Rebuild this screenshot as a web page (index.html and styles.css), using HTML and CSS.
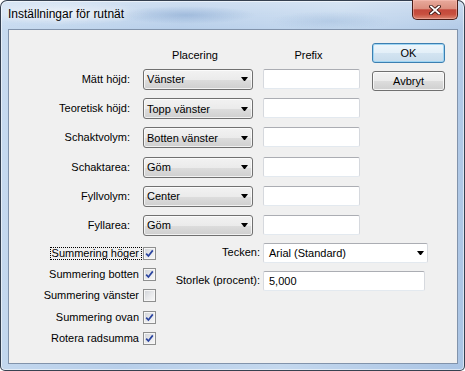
FILE: index.html
```html
<!DOCTYPE html>
<html lang="sv">
<head>
    <meta charset="UTF-8">
    <title>Inställningar för rutnät</title>
    <link rel="stylesheet" href="styles.css">
</head>
<body>
    <div class="window">
        <div class="titlebar">
            <span class="title">Inställningar för rutnät</span>
            <button class="close-button" type="button" aria-label="Stäng">
                <svg viewBox="0 0 12 10" width="12" height="10">
                    <path d="M2 1.5 L10 8.5 M10 1.5 L2 8.5" stroke="#3a1612" stroke-width="3.6" stroke-linecap="square"/>
                    <path d="M2 1.5 L10 8.5 M10 1.5 L2 8.5" stroke="#fff" stroke-width="1.8" stroke-linecap="square"/>
                </svg>
            </button>
        </div>

        <div class="client">
            <div class="top">
                <div class="fields">
                    <span></span>
                    <span class="col-head">Placering</span>
                    <span class="col-head">Prefix</span>

                    <label class="field-label">Mätt höjd:</label>
                    <div class="combo"><span>Vänster</span><i class="arrow"></i></div>
                    <div class="textbox"></div>

                    <label class="field-label">Teoretisk höjd:</label>
                    <div class="combo"><span>Topp vänster</span><i class="arrow"></i></div>
                    <div class="textbox"></div>

                    <label class="field-label">Schaktvolym:</label>
                    <div class="combo"><span>Botten vänster</span><i class="arrow"></i></div>
                    <div class="textbox"></div>

                    <label class="field-label">Schaktarea:</label>
                    <div class="combo"><span>Göm</span><i class="arrow"></i></div>
                    <div class="textbox"></div>

                    <label class="field-label">Fyllvolym:</label>
                    <div class="combo"><span>Center</span><i class="arrow"></i></div>
                    <div class="textbox"></div>

                    <label class="field-label">Fyllarea:</label>
                    <div class="combo"><span>Göm</span><i class="arrow"></i></div>
                    <div class="textbox"></div>
                </div>

                <div class="buttons">
                    <button class="btn btn-default" type="button">OK</button>
                    <button class="btn" type="button">Avbryt</button>
                </div>
            </div>

            <div class="bottom">
                <div class="checks">
                    <div class="check-row">
                        <span class="check-label focused">Summering höger</span>
                        <span class="box"><svg viewBox="0 0 11 11" width="11" height="11"><path d="M2.2 5.6 L4.4 8 L8.8 2.4" fill="none" stroke="#2a44a0" stroke-width="1.7"/></svg></span>
                    </div>
                    <div class="check-row">
                        <span class="check-label">Summering botten</span>
                        <span class="box"><svg viewBox="0 0 11 11" width="11" height="11"><path d="M2.2 5.6 L4.4 8 L8.8 2.4" fill="none" stroke="#2a44a0" stroke-width="1.7"/></svg></span>
                    </div>
                    <div class="check-row">
                        <span class="check-label">Summering vänster</span>
                        <span class="box"></span>
                    </div>
                    <div class="check-row">
                        <span class="check-label">Summering ovan</span>
                        <span class="box"><svg viewBox="0 0 11 11" width="11" height="11"><path d="M2.2 5.6 L4.4 8 L8.8 2.4" fill="none" stroke="#2a44a0" stroke-width="1.7"/></svg></span>
                    </div>
                    <div class="check-row">
                        <span class="check-label">Rotera radsumma</span>
                        <span class="box"><svg viewBox="0 0 11 11" width="11" height="11"><path d="M2.2 5.6 L4.4 8 L8.8 2.4" fill="none" stroke="#2a44a0" stroke-width="1.7"/></svg></span>
                    </div>
                </div>

                <div class="font-form">
                    <label class="field-label">Tecken:</label>
                    <div class="dropdown"><span>Arial (Standard)</span><i class="arrow"></i></div>
                    <label class="field-label">Storlek (procent):</label>
                    <div class="textbox size-box">5,000</div>
                </div>
            </div>
        </div>
    </div>
</body>
</html>
```

FILE: styles.css
```css
* {
    box-sizing: border-box;
}

body {
    margin: 0;
    background: #fff;
    font-family: "Liberation Sans", Arial, sans-serif;
    font-size: 11px;
    color: #000;
}

.window {
    width: 465px;
    height: 371px;
    border: 1px solid rgba(28, 38, 52, 0.85);
    border-radius: 7px 7px 5px 5px;
    padding: 0 6px 6px 7px;
    display: flex;
    flex-direction: column;
    box-shadow: inset 0 0 0 1px rgba(255, 255, 255, 0.55);
    background:
        radial-gradient(ellipse 70px 9px at 185px 14px, rgba(120, 155, 200, 0.45), transparent),
        radial-gradient(ellipse 90px 12px at 60px 12px, rgba(255, 255, 255, 0.55), transparent),
        radial-gradient(ellipse 60px 10px at 330px 20px, rgba(150, 180, 215, 0.4), transparent),
        linear-gradient(to bottom, rgba(255, 255, 255, 0.3), rgba(255, 255, 255, 0) 28px),
        linear-gradient(100deg, #c8dbf0 0%, #b8cfea 35%, #c4d8ee 65%, #aac4e4 100%);
}

/* title bar */

.titlebar {
    height: 28px;
    flex: none;
    display: flex;
    justify-content: space-between;
    align-items: flex-start;
}

.title {
    font-size: 12px;
    line-height: 15px;
    margin-top: 6px;
    text-shadow: 0 0 6px rgba(255, 255, 255, 0.9);
}

.close-button {
    width: 46px;
    height: 20px;
    margin-top: -1px;
    padding: 0;
    border: 1px solid #4a1d17;
    border-top: none;
    border-radius: 0 0 5px 5px;
    display: flex;
    align-items: center;
    justify-content: center;
    box-shadow: inset 0 0 0 1px rgba(255, 200, 190, 0.45);
    background: linear-gradient(#e8aa9c 0%, #dc8f7f 45%, #c3483b 52%, #c8503f 75%, #da8571 100%);
}

/* client area */

.client {
    flex: 1;
    background: #f0f0f0;
    border: 1px solid #8193ab;
    display: flex;
    flex-direction: column;
}

.top {
    display: flex;
    align-items: flex-start;
}

.fields {
    margin-top: 19px;
    display: grid;
    grid-template-columns: 124px 110px 97px;
    grid-template-rows: 11.8px repeat(6, 21px);
    column-gap: 10px;
    row-gap: 8.2px;
    align-items: center;
}

.col-head {
    text-align: center;
    padding-right: 6px;
    line-height: 12px;
    align-self: start;
}

.field-label {
    text-align: right;
    padding-right: 3px;
    line-height: 13px;
}

.combo {
    height: 21px;
    border: 1px solid #707070;
    border-radius: 3px;
    padding: 0 4px 0 3px;
    display: flex;
    align-items: center;
    justify-content: space-between;
    box-shadow: inset 0 0 0 1px rgba(255, 255, 255, 0.7);
    background: linear-gradient(#f2f2f2 0%, #ebebeb 50%, #dddddd 51%, #cfcfcf 100%);
}

.arrow {
    width: 1px;
    height: 0;
    border-top: 4px solid #000;
    border-left: 3px solid transparent;
    border-right: 3px solid transparent;
    box-sizing: content-box;
}

.textbox {
    height: 20px;
    align-self: start;
    background: #fff;
    border: 1px solid;
    border-color: #abadb3 #d6d9de #e3e9ef #d6d9de;
    border-radius: 2px;
    padding: 0 4px;
    line-height: 18px;
}

.buttons {
    margin-left: 12px;
    margin-top: 13px;
    display: flex;
    flex-direction: column;
    gap: 8px;
}

.btn {
    width: 73px;
    height: 20px;
    padding: 0;
    font-family: inherit;
    font-size: 11px;
    color: #000;
    border: 1px solid #707070;
    border-radius: 3px;
    box-shadow: inset 0 0 0 1px rgba(252, 252, 252, 0.8);
    background: linear-gradient(#f2f2f2 0%, #ebebeb 50%, #dddddd 51%, #cfcfcf 100%);
}

.btn-default {
    border-color: #3c7fb1;
    box-shadow: inset 0 0 0 1px #9fd5f3;
    background: linear-gradient(#eef6fb 0%, #e3eff8 50%, #d3e4f1 51%, #c8dcec 100%);
}

/* lower part */

.bottom {
    margin-top: 7px;
    display: flex;
    align-items: flex-start;
}

.checks {
    width: 147px;
    padding-top: 4px;
    display: flex;
    flex-direction: column;
    gap: 8.25px;
}

.check-row {
    height: 13px;
    display: flex;
    justify-content: flex-end;
    align-items: center;
    gap: 4px;
}

.check-label {
    line-height: 13px;
}

.check-label.focused {
    border: 1px dotted #000;
    line-height: 11px;
    padding: 0 2px 0 1px;
    margin-right: -3px;
    margin-left: 1px;
}

.box {
    width: 13px;
    height: 13px;
    flex: none;
    border: 1px solid #8e8f8f;
    display: flex;
    align-items: center;
    justify-content: center;
    box-shadow: inset 0 0 0 1px #f6f6f6;
    background: linear-gradient(135deg, #cfd2d7 0%, #e9eaec 55%, #f8f8f8 100%);
}

.font-form {
    display: grid;
    grid-template-columns: 104px 165px;
    grid-template-rows: 20px 20px;
    column-gap: 3px;
    row-gap: 8px;
    align-items: center;
}

.font-form .field-label {
    padding-right: 0;
}

.dropdown {
    height: 20px;
    background: #fff;
    border: 1px solid;
    border-color: #abadb3 #d6d9de #e3e9ef #d6d9de;
    border-radius: 2px;
    padding: 0 3px 0 5px;
    display: flex;
    align-items: center;
    justify-content: space-between;
}

.size-box {
    width: 162px;
    padding-left: 5px;
}
```
